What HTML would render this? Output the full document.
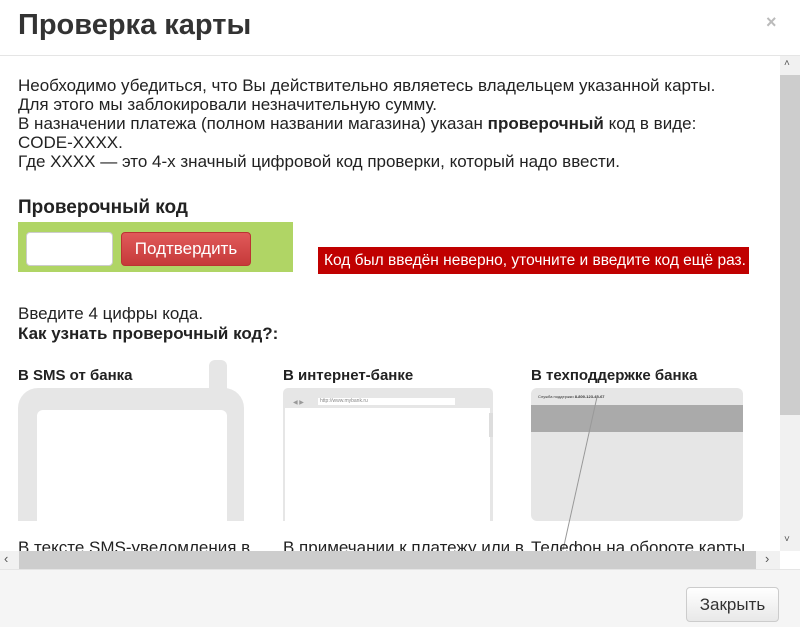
<!DOCTYPE html>
<html><head><meta charset="utf-8"><style>
*{margin:0;padding:0;box-sizing:border-box}
body{width:800px;height:627px;overflow:hidden;background:#fff;font-family:"Liberation Sans",Arial,sans-serif;color:#222;position:relative}
.a{position:absolute}
.t{font-size:17px;line-height:19px}
.b{font-weight:bold}
</style></head><body>
<div class="a" style="left:18px;top:9px;font-size:29px;font-weight:bold;color:#333">Проверка карты</div>
<div class="a" style="left:766px;top:12px;font-size:18px;color:#bbb;font-weight:bold">×</div>
<div class="a" style="left:0;top:55px;width:800px;height:1px;background:#e5e5e5"></div>
<div class="a t" style="left:18px;top:76px;width:770px;white-space:nowrap">Необходимо убедиться, что Вы действительно являетесь владельцем указанной карты.<br>Для этого мы заблокировали незначительную сумму.<br>В назначении платежа (полном названии магазина) указан <b>проверочный</b> код в виде:<br>CODE-XXXX.<br>Где XXXX — это 4-х значный цифровой код проверки, который надо ввести.</div>
<div class="a b" style="left:18px;top:197px;font-size:19px">Проверочный код</div>
<div class="a" style="left:18px;top:222px;width:275px;height:50px;background:#b0d565"></div>
<div class="a" style="left:26px;top:232px;width:87px;height:34px;background:#fff;border:1px solid #ccc;border-radius:4px"></div>
<div class="a" style="left:121px;top:232px;width:130px;height:34px;background:linear-gradient(#e05a5a,#c63a3a);border:1px solid #b33;border-radius:4px;color:#fff;font-size:17px;text-align:center;line-height:32px">Подтвердить</div>
<div class="a" style="left:318px;top:247px;width:431px;height:27px;background:#c00000;color:#fff;font-size:15.5px;line-height:27px;padding-left:6px;white-space:nowrap">Код был введён неверно, уточните и введите код ещё раз.</div>
<div class="a t" style="left:18px;top:304px">Введите 4 цифры кода.</div>
<div class="a t b" style="left:18px;top:324px">Как узнать проверочный код?:</div>
<div class="a b" style="left:18px;top:367px;font-size:15px">В SMS от банка</div>
<div class="a b" style="left:283px;top:367px;font-size:15px">В интернет-банке</div>
<div class="a b" style="left:531px;top:367px;font-size:15px">В техподдержке банка</div>
<div class="a" style="left:209px;top:360px;width:18px;height:40px;background:#e6e6e6;border-radius:6px 6px 0 0"></div>
<div class="a" style="left:18px;top:388px;width:226px;height:133px;background:#e6e6e6;border-radius:20px 20px 0 0"></div>
<div class="a" style="left:37px;top:410px;width:190px;height:111px;background:#fff;border-radius:6px 6px 0 0"></div>
<div class="a" style="left:283px;top:388px;width:210px;height:133px;background:#e6e6e6;border-radius:5px 5px 0 0"></div>
<div class="a" style="left:285px;top:408px;width:205px;height:113px;background:#fff"></div>
<div class="a" style="left:489px;top:413px;width:4px;height:24px;background:#ddd"></div>
<div class="a" style="left:318px;top:398px;width:137px;height:7px;background:#fff;font-size:5px;line-height:7px;color:#888;padding-left:2px">http://www.mybank.ru</div>
<div class="a" style="left:293px;top:399px;font-size:6px;color:#999">◀ ▶</div>
<div class="a" style="left:531px;top:388px;width:212px;height:133px;background:#e6e6e6;border-radius:6px"></div>
<div class="a" style="left:531px;top:405px;width:212px;height:27px;background:#aaa"></div>
<div class="a" style="left:538px;top:394px;font-size:4px;color:#333">Служба поддержки <b>8-800-123-45-67</b></div>
<svg class="a" style="left:555px;top:395px" width="50" height="160"><line x1="42" y1="2" x2="8" y2="155" stroke="#999" stroke-width="1"/></svg>
<div class="a t" style="left:18px;top:538px;height:13px;overflow:hidden;width:760px;white-space:nowrap"><span style="position:absolute;left:0">В тексте SMS-уведомления в</span><span style="position:absolute;left:265px">В примечании к платежу или в</span><span style="position:absolute;left:513px">Телефон на обороте карты</span></div>
<div class="a" style="left:780px;top:56px;width:20px;height:495px;background:#f1f1f1"></div>
<div class="a" style="left:780px;top:75px;width:20px;height:340px;background:#cdcdcd"></div>
<div class="a" style="left:784px;top:58px;font-size:10px;color:#555">˄</div>
<div class="a" style="left:784px;top:534px;font-size:10px;color:#555">˅</div>
<div class="a" style="left:0;top:551px;width:780px;height:18px;background:#f1f1f1"></div>
<div class="a" style="left:19px;top:551px;width:737px;height:18px;background:#cdcdcd"></div>
<div class="a" style="left:4px;top:551px;font-size:13px;color:#555">‹</div>
<div class="a" style="left:765px;top:551px;font-size:13px;color:#555">›</div>
<div class="a" style="left:0;top:569px;width:800px;height:58px;background:#f5f5f5;border-top:1px solid #e5e5e5"></div>
<div class="a" style="left:686px;top:587px;width:93px;height:35px;background:linear-gradient(#fff,#e8e8e8);border:1px solid #ccc;border-radius:4px;font-size:17px;text-align:center;line-height:33px;color:#333">Закрыть</div>
</body></html>
